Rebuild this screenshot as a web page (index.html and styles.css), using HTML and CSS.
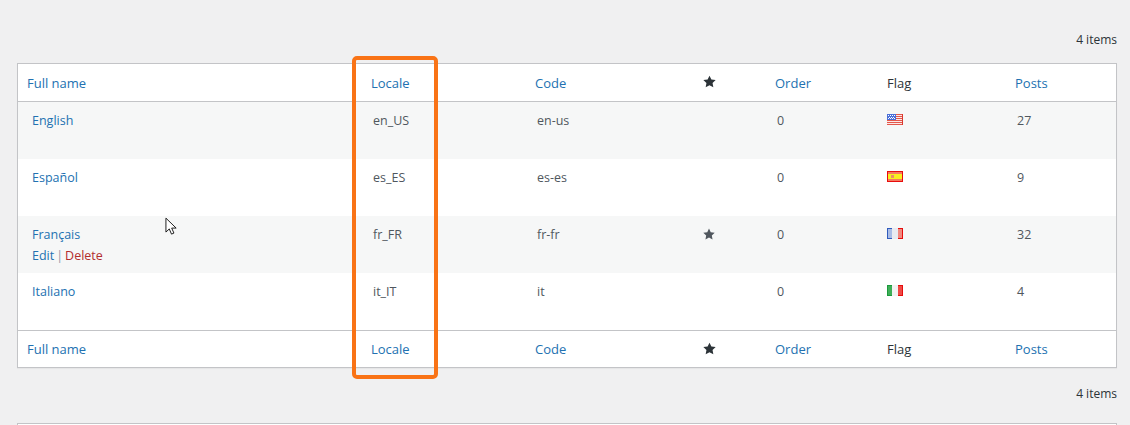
FILE: index.html
```html
<!DOCTYPE html>
<html lang="en">
<head>
<meta charset="utf-8">
<title>Languages</title>
<link rel="stylesheet" href="styles.css">
</head>
<body>
<main class="wrap">
  <div class="tablenav top">4 items</div>
  <table class="list">
    <colgroup>
      <col class="c-name"><col class="c-locale"><col class="c-code"><col class="c-def"><col class="c-order"><col class="c-flag"><col class="c-posts">
    </colgroup>
    <thead>
      <tr>
        <th><a href="#">Full name</a></th><th><a href="#">Locale</a></th><th><a href="#">Code</a></th>
        <th class="star-head"><svg class="star" viewBox="0 0 20 20"><polygon points="10,1 12.9,7 19.5,7.8 14.7,12.4 15.9,19 10,15.8 4.1,19 5.3,12.4 .5,7.8 7.1,7"/></svg></th>
        <th><a href="#">Order</a></th><th class="plain">Flag</th><th><a href="#">Posts</a></th>
      </tr>
    </thead>
    <tbody>
      <tr class="alt">
        <td class="name"><a href="#">English</a></td><td>en_US</td><td>en-us</td><td></td><td>0</td>
        <td class="flag"><svg class="flagimg" viewBox="0 0 16 11"><rect width="16" height="11" fill="#fbe9e6"/><path d="M0 0h16v1H0zM0 2h16v1H0zM0 4h16v1H0zM0 6h16v1H0zM0 8h16v1H0zM0 10h16v1H0z" fill="#e4574c"/><path d="M15 0h1v11h-1z" fill="#d9382e"/><rect width="9" height="6" fill="#4a6fd8"/><path d="M1 1h1v1H1zM3 1h1v1H3zM5 1h1v1H5zM7 1h1v1H7zM2 3h1v1H2zM4 3h1v1H4zM6 3h1v1H6zM1 4h1v1H1zM3 4h1v1H3zM5 4h1v1H5zM7 4h1v1H7z" fill="#fff"/></svg></td>
        <td>27</td>
      </tr>
      <tr>
        <td class="name"><a href="#">Español</a></td><td>es_ES</td><td>es-es</td><td></td><td>0</td>
        <td class="flag"><svg class="flagimg" viewBox="0 0 16 11"><rect width="16" height="11" fill="#e80c0c"/><rect y="1" x="1" width="14" height="2" fill="#f57a60"/><rect x="1" y="3" width="14" height="5" fill="#f8f020"/><rect x="1" y="8" width="14" height="2" fill="#f57a60"/><rect x="4" y="4" width="3" height="3" fill="#e8906a"/></svg></td>
        <td>9</td>
      </tr>
      <tr class="alt">
        <td class="name"><a href="#">Français</a><div class="actions"><a href="#">Edit</a><span class="sep">|</span><a href="#" class="del">Delete</a></div></td>
        <td>fr_FR</td><td>fr-fr</td>
        <td><svg class="star muted" viewBox="0 0 20 20"><polygon points="10,1 12.9,7 19.5,7.8 14.7,12.4 15.9,19 10,15.8 4.1,19 5.3,12.4 .5,7.8 7.1,7"/></svg></td>
        <td>0</td>
        <td class="flag"><svg class="flagimg" viewBox="0 0 16 11"><rect width="16" height="11" fill="#e8eaf0"/><rect width="5" height="11" fill="#2f5bbd"/><rect x="1" y="1" width="4" height="9" fill="#a9bce6"/><rect x="11" width="5" height="11" fill="#e60c0c"/><rect x="11" y="1" width="4" height="9" fill="#f08a80"/></svg></td>
        <td>32</td>
      </tr>
      <tr>
        <td class="name"><a href="#">Italiano</a></td><td>it_IT</td><td>it</td><td></td><td>0</td>
        <td class="flag"><svg class="flagimg" viewBox="0 0 16 11"><rect width="16" height="11" fill="#f2f2f2"/><rect width="5" height="11" fill="#1c9a3c"/><rect x="1" y="1" width="4" height="9" fill="#3fae58"/><rect x="11" width="5" height="11" fill="#e60c0c"/><rect x="11" y="1" width="4" height="9" fill="#ee4a46"/></svg></td>
        <td>4</td>
      </tr>
    </tbody>
    <tfoot>
      <tr>
        <th><a href="#">Full name</a></th><th><a href="#">Locale</a></th><th><a href="#">Code</a></th>
        <th class="star-head"><svg class="star" viewBox="0 0 20 20"><polygon points="10,1 12.9,7 19.5,7.8 14.7,12.4 15.9,19 10,15.8 4.1,19 5.3,12.4 .5,7.8 7.1,7"/></svg></th>
        <th><a href="#">Order</a></th><th class="plain">Flag</th><th><a href="#">Posts</a></th>
      </tr>
    </tfoot>
  </table>
  <div class="tablenav bottom">4 items</div>
  <div class="next-panel"></div>
</main>
<div class="highlight"></div>
<svg class="cursor" viewBox="0 0 14 20"><path d="M1 1v15l3.6-3.4 2.4 5.6 2.6-1.1-2.4-5.4H12z" fill="#fff" stroke="#111" stroke-width="1"/></svg>
</body>
</html>
```
FILE: styles.css
```css
* { box-sizing: border-box; }
html, body { margin: 0; height: 425px; overflow: hidden; }
body {
  position: relative;
  background: #f0f0f1;
  font-family: "Open Sans", "Noto Sans", sans-serif;
  font-size: 12.5px;
  color: #50575e;
}
a { color: #2271b1; text-decoration: none; }
.wrap { width: 1100px; margin-left: 17px; }
.tablenav { text-align: right; line-height: 20px; color: #2c3338; font-size: 12px; }
.tablenav.top { height: 63px; padding-top: 30px; }
.tablenav.bottom { height: 55px; padding-top: 16px; }
.next-panel { height: 20px; border: 1px solid #c3c4c7; background: #fff; }
.list {
  width: 1100px;
  table-layout: fixed;
  border-collapse: separate;
  border-spacing: 0;
  background: #fff;
  border: 1px solid #c3c4c7;
  box-shadow: 0 1px 1px rgba(0,0,0,.04);
}
.c-name { width: 344px; }
.c-locale { width: 164px; }
.c-code { width: 168px; }
.c-def { width: 72px; }
.c-order { width: 112px; }
.c-flag { width: 128px; }
.list th {
  height: 37px;
  padding: 0 0 0 9px;
  text-align: left;
  font-weight: 400;
  font-size: 13px;
  line-height: 20px;
}
.list thead th { height: 38px; border-bottom: 1px solid #c3c4c7; }
.list tfoot th { border-top: 1px solid #c3c4c7; }
.list th.plain { color: #2c3338; }
.list th.star-head { padding-bottom: 2px; }
.list td {
  height: 57px;
  padding: 8px 0 0 11px;
  vertical-align: top;
  line-height: 21px;
}
.list td.name { padding-left: 14px; }
.alt td { background: #f6f7f7; }
.actions { line-height: 21px; }
.sep { color: #8c9aa8; margin: 0 2px; }
.del { color: #b32d2e; }
.star { display: block; width: 13px; height: 13px; fill: #2c3338; }
.star.muted { fill: #50575e; width: 12px; height: 12px; margin: 4px 0 0 -2px; }
.flag { padding-left: 9px !important; }
.flagimg { display: block; width: 16px; height: 11px; margin-top: 4px; }
.highlight {
  position: absolute;
  left: 352px;
  top: 56px;
  width: 86px;
  height: 323px;
  border: 4px solid #f97316;
  border-radius: 5px;
}
.cursor { position: absolute; left: 165px; top: 217px; width: 13px; height: 19px; }
```
